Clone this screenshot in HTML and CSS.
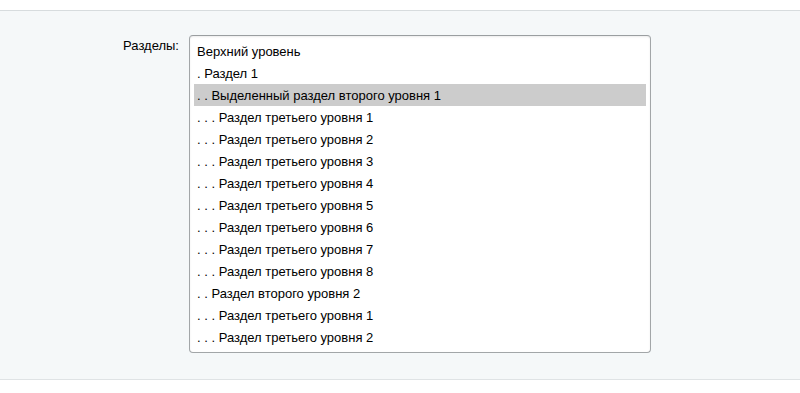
FILE: index.html
```html
<!DOCTYPE html>
<html lang="ru">
<head>
    <meta charset="UTF-8">
    <meta name="viewport" content="width=device-width, initial-scale=1.0">
    <title>Разделы</title>
    <link rel="stylesheet" href="styles.css">
</head>
<body>
    <div class="panel">
        <div class="field">
            <label class="field-label">Разделы:</label>
            <div class="listbox">
                <div class="option">Верхний уровень</div>
                <div class="option">. Раздел 1</div>
                <div class="option selected">. . Выделенный раздел второго уровня 1</div>
                <div class="option">. . . Раздел третьего уровня 1</div>
                <div class="option">. . . Раздел третьего уровня 2</div>
                <div class="option">. . . Раздел третьего уровня 3</div>
                <div class="option">. . . Раздел третьего уровня 4</div>
                <div class="option">. . . Раздел третьего уровня 5</div>
                <div class="option">. . . Раздел третьего уровня 6</div>
                <div class="option">. . . Раздел третьего уровня 7</div>
                <div class="option">. . . Раздел третьего уровня 8</div>
                <div class="option">. . Раздел второго уровня 2</div>
                <div class="option">. . . Раздел третьего уровня 1</div>
                <div class="option">. . . Раздел третьего уровня 2</div>
            </div>
        </div>
    </div>
</body>
</html>
```

FILE: styles.css
```css
body {
    margin: 0;
    padding-top: 10px;
    background: #fff;
    font-family: 'Liberation Sans', Arial, sans-serif;
    font-size: 13px;
    color: #000;
}
.panel {
    background: #f5f8f9;
    border-top: 1px solid #d7dcde;
    border-bottom: 1px solid #dfe3e5;
    padding: 24px 0 26px;
}
.field {
    display: flex;
    gap: 10px;
}
.field-label {
    width: 179px;
    text-align: right;
    padding-top: 3px;
    color: #000;
}
.listbox {
    width: 452px;
    padding: 4px;
    background: #fff;
    border: 1px solid #a2a6a8;
    border-top-color: #9a9ea0;
    border-radius: 4px;
    box-shadow: inset 0 1px 2px rgba(0,0,0,0.08);
}
.option {
    height: 21px;
    padding-top: 1px;
    line-height: 22px;
    padding-left: 3px;
    white-space: nowrap;
}
.option.selected {
    background: #cccccc;
}
```
